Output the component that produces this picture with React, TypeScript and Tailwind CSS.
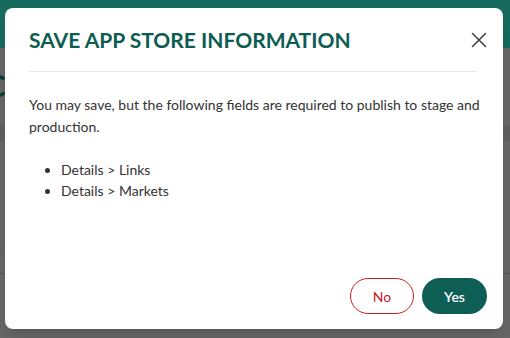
import React from "react";

const font = { fontFamily: "Lato, 'Open Sans', sans-serif" };

function CloseIcon() {
  return (
    <svg width="16" height="16" viewBox="0 0 16 16" fill="none">
      <path d="M1.5 1.5L14.5 14.5M14.5 1.5L1.5 14.5" stroke="#444" strokeWidth="1.6" strokeLinecap="round" />
    </svg>
  );
}

export default function App() {
  return (
    <div className="relative w-[510px] h-[338px] overflow-hidden bg-[#666666]" style={font}>
      {/* page behind the overlay */}
      <div className="flex flex-col h-full">
        <div className="h-[48px] bg-[#176a5e]" />
        <div className="h-[26px]" />
        <div className="text-[30px] font-bold leading-[22px] text-[#0d3b35] -ml-[14px]">C</div>
        <div className="h-[29px]" />
        <div className="h-[16px] bg-[#5f5f5f]" />
        <div className="h-[98px]" />
        <div className="text-[14px] leading-[14px] text-[#222] -ml-[6px]">c</div>
        <div className="h-[20px]" />
        <div className="h-px bg-[#555]" />
      </div>

      {/* dialog */}
      <div className="absolute left-[5px] top-[8px] w-[498px] h-[321px] bg-white rounded-[8px] shadow-lg flex flex-col">
        <div className="flex items-start justify-between pl-6 pr-4 pt-[18px]">
          <h2 className="text-[21px] leading-[28px] font-bold uppercase text-[#0d5c52]">
            Save App Store Information
          </h2>
          <button className="mt-[6px] w-[16px] h-[16px] flex items-center justify-center">
            <CloseIcon />
          </button>
        </div>
        <div className="ml-6 mr-[26px] mt-[17px] h-px bg-[#e8e8e8]" />

        <div className="pl-6 pr-3 pt-[22px] text-[14px] text-[#333]">
          <p className="leading-[22px]">
            You may save, but the following fields are required to publish to stage and production.
          </p>
          <ul className="list-disc pl-8 mt-[21px] leading-[21px]">
            <li>Details &gt; Links</li>
            <li>Details &gt; Markets</li>
          </ul>
        </div>

        <div className="mt-auto flex justify-end gap-2 pr-4 pb-[15px]">
          <button className="w-[64px] h-[36px] rounded-full border border-[#d01c1c] text-[#c8161d] text-[14px]">
            No
          </button>
          <button className="w-[65px] h-[36px] rounded-full bg-[#0f5e55] text-white text-[14px] font-semibold">
            Yes
          </button>
        </div>
      </div>
    </div>
  );
}
